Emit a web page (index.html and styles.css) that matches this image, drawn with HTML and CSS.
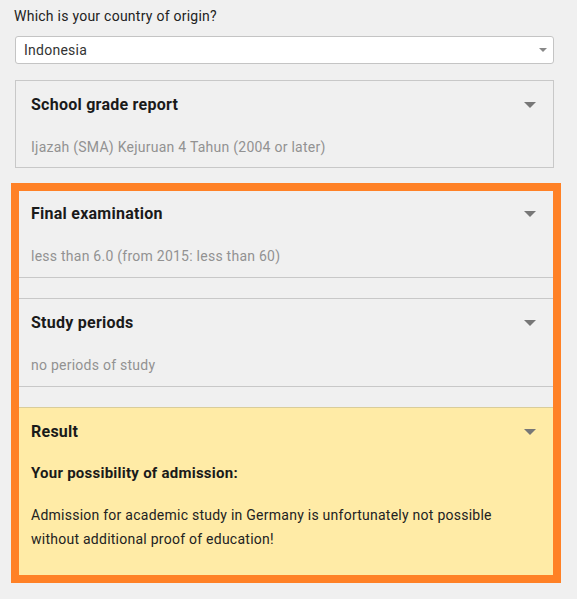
FILE: index.html
```html
<!DOCTYPE html>
<html lang="en">
<head>
<meta charset="utf-8">
<title>Recognition check</title>
<link rel="stylesheet" href="styles.css">
</head>
<body>
<main class="page">
  <label class="field-label" for="country">Which is your country of origin?</label>
  <div class="select">
    <span class="select-value">Indonesia</span>
    <span class="select-caret"></span>
  </div>

  <section class="panel panel-boxed">
    <div class="panel-head">
      <h2 class="panel-title">School grade report</h2>
      <span class="caret"></span>
    </div>
    <p class="panel-value">Ijazah (SMA) Kejuruan 4 Tahun (2004 or later)</p>
  </section>

  <div class="highlight">
    <section class="panel panel-first">
      <div class="panel-head">
        <h2 class="panel-title">Final examination</h2>
        <span class="caret"></span>
      </div>
      <p class="panel-value">less than 6.0 (from 2015: less than 60)</p>
    </section>

    <section class="panel">
      <div class="panel-head">
        <h2 class="panel-title">Study periods</h2>
        <span class="caret"></span>
      </div>
      <p class="panel-value">no periods of study</p>
    </section>

    <section class="panel panel-result">
      <div class="panel-head">
        <h2 class="panel-title">Result</h2>
        <span class="caret"></span>
      </div>
      <h3 class="result-heading">Your possibility of admission:</h3>
      <p class="result-text">Admission for academic study in Germany is unfortunately not possible without additional proof of education!</p>
    </section>
  </div>
</main>
</body>
</html>
```

FILE: styles.css
```css
* {
  box-sizing: border-box;
}

html,
body {
  margin: 0;
  background: #f0f0f0;
}

body {
  font-family: Roboto, "Liberation Sans", sans-serif;
  font-size: 14px;
  letter-spacing: 0.25px;
  color: #222;
}

.page {
  padding: 6px 23px 17px 15px;
}

.field-label {
  display: block;
  margin-left: -1px;
  line-height: 20px;
  color: #222;
}

.select {
  display: flex;
  align-items: center;
  justify-content: space-between;
  height: 28px;
  margin-top: 10px;
  padding: 0 6px 0 8px;
  background: #fff;
  border: 1px solid #c4c4c4;
  border-radius: 3px;
}

.select-value {
  color: #333;
}

.select-caret {
  width: 0;
  height: 0;
  border-left: 4px solid transparent;
  border-right: 4px solid transparent;
  border-top: 4px solid #888;
}

.panel {
  padding: 14px 17px 11px 12px;
  border-top: 1px solid #c8c8c8;
  border-bottom: 1px solid #c8c8c8;
}

.panel + .panel {
  margin-top: 20px;
}

.panel-boxed {
  margin-top: 16px;
  padding: 14px 17px 10px 15px;
  border: 1px solid #c8c8c8;
}

.panel-first {
  border-top: 0;
  padding-top: 13px;
}

.panel-head {
  display: flex;
  align-items: center;
  justify-content: space-between;
  height: 20px;
}

.panel-title {
  margin: 0;
  font-size: 16px;
  font-weight: 700;
  line-height: 20px;
  color: #1a1a1a;
}

.caret {
  width: 0;
  height: 0;
  border-left: 6px solid transparent;
  border-right: 6px solid transparent;
  border-top: 6px solid #777;
}

.panel-value {
  margin: 22px 0 0;
  line-height: 20px;
  color: #929292;
}

.highlight {
  margin: 15px -7px 0 -4px;
  border: 8px solid #ff8126;
}

.panel-result {
  background: #ffeba6;
  border-top-color: #d9cd9a;
  border-bottom: 0;
  padding-bottom: 24px;
}

.result-heading {
  margin: 21px 0 0;
  font-size: 15px;
  font-weight: 700;
  line-height: 20px;
  color: #1a1a1a;
}

.result-text {
  max-width: 480px;
  margin: 20px 0 0;
  line-height: 24px;
  color: #222;
}
```
